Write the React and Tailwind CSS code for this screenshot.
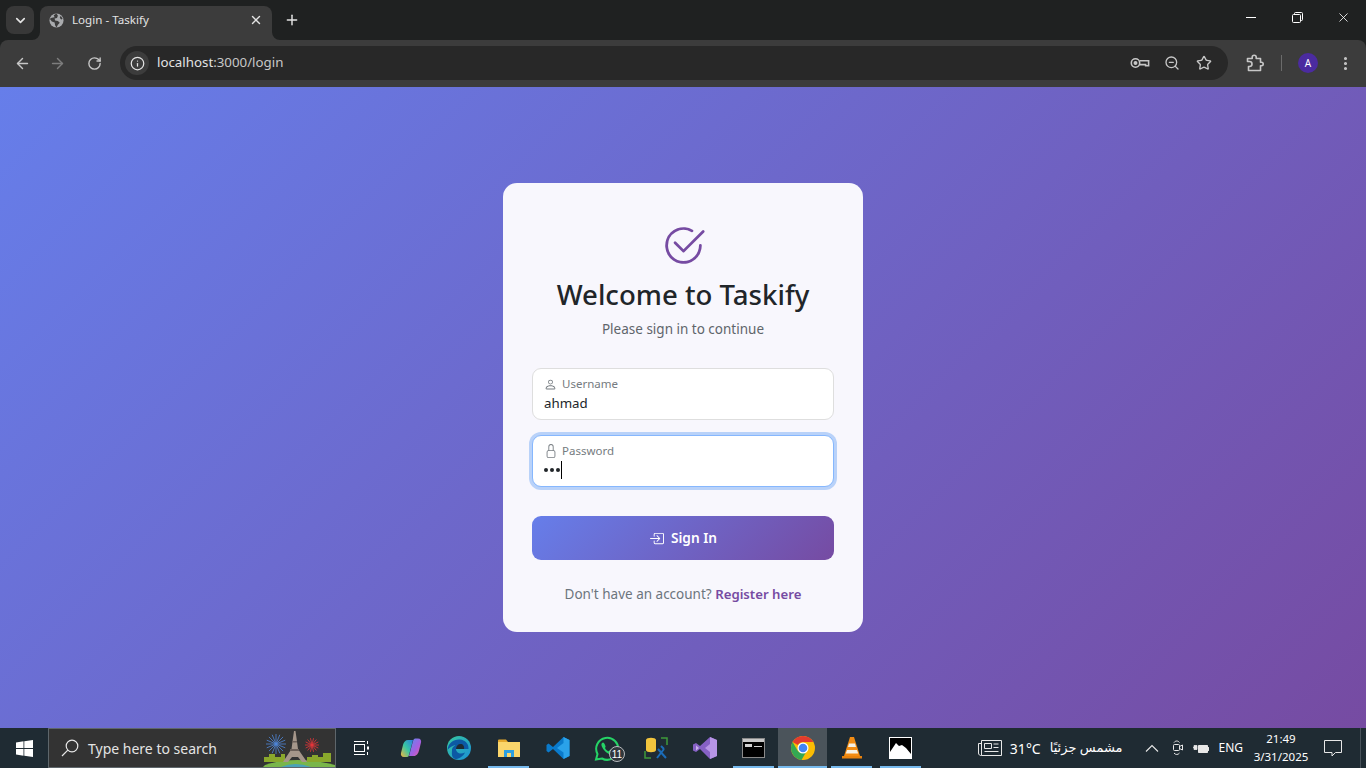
import { BsCheck2Circle, BsPerson, BsLock, BsBoxArrowInRight } from "react-icons/bs"
import { ChevronDown, X, Plus, ArrowLeft, ArrowRight, RotateCw, Info, ZoomOut, Star, EllipsisVertical } from "lucide-react"

const ui = "font-['Noto_Sans','Open_Sans',sans-serif]"

function KeyIcon() {
  return (
    <svg width="20" height="12" viewBox="0 0 20 12" fill="none" stroke="#c7c7c7" strokeWidth="1.6">
      <circle cx="5.5" cy="6" r="4.2" />
      <circle cx="5.5" cy="6" r="1.2" fill="#c7c7c7" />
      <path d="M9.7 3.8H18.6V8.8H15.6V7.6H9.7" />
    </svg>
  )
}

function RestoreIcon() {
  return (
    <svg width="11" height="11" viewBox="0 0 11 11" fill="none" stroke="#fff" strokeWidth="1">
      <rect x="0.5" y="2.5" width="8" height="8" rx="1" />
      <path d="M2.5 2.5V1.500a1 1 0 0 1 1-1h6a1 1 0 0 1 1 1v6a1 1 0 0 1-1 1H8.500" />
    </svg>
  )
}

function PuzzleIcon() {
  return (
    <svg width="18" height="18" viewBox="0 0 18 18" fill="none" stroke="#c7c7c7" strokeWidth="1.600" strokeLinejoin="round" className="ml-[18px]">
      <path d="M1.500 4.500H6.200V3.300a2 2 0 0 1 4 0V4.500H14.500V8.300H15.500a1.700 1.700 0 0 1 0 3.400H14.500V16.500H2.500V12.500H3.500a2.500 2.500 0 0 0 0-5H1.500z" />
    </svg>
  )
}

function TabFlare({ side }) {
  return (
    <svg width="8" height="8" viewBox="0 0 8 8" className={side === "left" ? "absolute bottom-0 -left-2" : "absolute bottom-0 -right-2"}>
      <path d={side === "left" ? "M8 0V8H0A8 8 0 0 0 8 0Z" : "M0 0V8H8A8 8 0 0 1 0 0Z"} fill="#3c3c3c" />
    </svg>
  )
}

function BrowserChrome() {
  return (
    <div className={`bg-[#1f2121] text-[#e3e3e3] ${ui}`}>
      <div className="flex h-[40px] items-end pl-[6px]">
        <div className="mb-[6px] flex h-[28px] w-[28px] items-center justify-center rounded-lg bg-[#383838]">
          <ChevronDown size={15} strokeWidth={2.6} color="#e3e3e3" />
        </div>
        <div className="relative ml-[6px] flex h-[34px] w-[232px] items-center rounded-t-lg bg-[#3c3c3c] pb-[6px] pl-[9px] pr-[8px]">
          <TabFlare side="left" />
          <TabFlare side="right" />
          <svg width="15" height="15" viewBox="0 0 16 16" className="shrink-0">
            <circle cx="8" cy="8" r="7.5" fill="#a9abae" />
            <path d="M8 .5 5 2.500l1 2-3 .5L.8 6 3 9l3 1 .5 3 1.500 2.400 1.500-3 2-2-2-2-3-.5-.5-2 2.500-.5 1-2.500zM12.500 3l2 3-1.500 1-1.500-2z" fill="#3c3c3c" />
          </svg>
          <span className="ml-[8px] flex-1 text-[11.6px] leading-none">Login - Taskify</span>
          <X size={14} strokeWidth={2.4} color="#e3e3e3" className="mr-[1px]" />
        </div>
        <div className="mb-[6px] ml-[12px] flex h-[28px] w-[16px] items-center justify-center">
          <Plus size={16} strokeWidth={2.2} color="#e3e3e3" />
        </div>
        <div className="mb-[6px] ml-auto flex h-[34px] items-center">
          <div className="flex w-[46px] justify-center"><div className="h-[1px] w-[10px] bg-white" /></div>
          <div className="flex w-[46px] justify-center"><RestoreIcon /></div>
          <div className="flex w-[46px] justify-center"><X size={15} strokeWidth={1.3} color="#fff" /></div>
        </div>
      </div>
      <div className="flex h-[47px] items-center rounded-t-[8px] bg-[#3c3c3c] pb-[1px] pl-[14px] pr-[12px]">
        <ArrowLeft size={17} strokeWidth={2} color="#c7c7c7" />
        <ArrowRight size={17} strokeWidth={2} color="#7d7d7d" className="ml-[18px]" />
        <RotateCw size={15} strokeWidth={2.2} color="#c7c7c7" className="ml-[21px]" />
        <div className="ml-[18px] flex h-[34px] flex-1 items-center rounded-full bg-[#282828] pl-[5px] pr-[16px]">
          <div className="flex h-[24px] w-[24px] items-center justify-center rounded-full bg-[#3c3c3c]">
            <Info size={15} strokeWidth={2} color="#e3e3e3" />
          </div>
          <div className="ml-[8px] flex-1 text-[13.3px] leading-none">
            localhost<span className="text-[#c7c7c7]">:3000/login</span>
          </div>
          <KeyIcon />
          <ZoomOut size={16} strokeWidth={2} color="#c7c7c7" className="ml-[14px]" />
          <Star size={16} strokeWidth={2} color="#c7c7c7" className="ml-[16px]" />
        </div>
        <PuzzleIcon />
        <div className="ml-[17px] h-[16px] w-[1px] bg-[#6b6b6b]" />
        <div className="ml-[16px] flex h-[20px] w-[20px] items-center justify-center rounded-full bg-[#4b2ba0] text-[10px] text-white">A</div>
        <EllipsisVertical size={17} strokeWidth={2.4} color="#c7c7c7" className="ml-[19px]" />
      </div>
    </div>
  )
}

function Field({ icon, label, focused, children }) {
  return (
    <div className={focused
      ? "h-[52px] rounded-[9px] border border-[#86b7fe] bg-white pl-[11px] shadow-[0_0_0_3px_#b9d2f9]"
      : "h-[52px] rounded-[9px] border border-[#dedede] bg-white pl-[11px]"}>
      <div className="flex h-[23px] items-end text-[11.5px] leading-[16px] text-[#757b80]">
        <span className="flex h-[16px] w-[18px] items-center">{icon}</span>
        {label}
      </div>
      <div className="mt-[1px]">{children}</div>
    </div>
  )
}

function LoginCard() {
  return (
    <div className="h-[449px] w-[360px] rounded-[14px] bg-[#f8f7fd] px-[29px] pt-[40px]">
      <div className="flex justify-center text-[#764ba2]">
        <BsCheck2Circle size={45} />
      </div>
      <h1 className="mt-[6px] text-center text-[27.6px] font-medium leading-[40px] text-[#212529]">Welcome to Taskify</h1>
      <p className="mt-[3px] text-center text-[13.5px] leading-[24px] text-[#5f656b]">Please sign in to continue</p>
      <div className="mt-[27px]">
        <Field icon={<BsPerson size={13} />} label="Username">
          <div className="text-[13.3px] leading-[20px] text-[#212529]">ahmad</div>
        </Field>
      </div>
      <div className="mt-[15px]">
        <Field icon={<BsLock size={14} />} label="Password" focused>
          <div className="flex h-[20px] items-center">
            <span className="h-[4px] w-[4px] rounded-full bg-[#212529]" />
            <span className="ml-[2px] h-[4px] w-[4px] rounded-full bg-[#212529]" />
            <span className="ml-[2px] h-[4px] w-[4px] rounded-full bg-[#212529]" />
            <span className="ml-[1px] h-[18px] w-[1px] bg-black" />
          </div>
        </Field>
      </div>
      <button className="mt-[29px] flex h-[44px] w-full items-center justify-center rounded-[9px] bg-[linear-gradient(135deg,#667eea,#764ba2)] text-[13.7px] font-semibold text-white">
        <BsBoxArrowInRight size={15} className="mr-[7px]" />
        Sign In
      </button>
      <p className="mt-[23px] text-center text-[13.5px] leading-[22px] text-[#6c757d]">
        Don't have an account? <span className="text-[13.2px] font-semibold text-[#764ba2]">Register here</span>
      </p>
    </div>
  )
}

function WinLogo() {
  return (
    <svg width="17" height="17" viewBox="0 0 17 17" fill="#fff">
      <path d="M0 2.400 7.500 1.300V8H0zM8.300 1.200 17 0V8H8.300zM0 8.900H7.500V15.700L0 14.600zM8.300 8.900H17V17L8.300 15.800z" />
    </svg>
  )
}

function Burst({ cx, cy, r, color, count }) {
  const rays = []
  for (let i = 0; i < count; i++) {
    const a = (i / count) * Math.PI * 2
    rays.push(
      <line key={i} x1={cx} y1={cy} x2={cx + Math.cos(a) * r} y2={cy + Math.sin(a) * r} stroke={color} strokeWidth="0.8" />
    )
  }
  return <g>{rays}</g>
}

function SearchArt() {
  return (
    <svg width="72" height="38" viewBox="0 0 72 38" className="absolute bottom-0 right-0">
      <Burst cx={13} cy={15} r={10} color="#4f86d8" count={16} />
      <Burst cx={49} cy={16} r={7} color="#e8353a" count={14} />
      <path d="M2 36Q32 26 72 36V38H0z" fill="#79b64a" />
      <path d="M18 38Q32 32 48 38z" fill="#4aa3b8" />
      <path d="M1 28h5v-3h6v3h6v-3h4v8H1zM44 28h5v-2h6v2h5v-4h8v9H44z" fill="#8aa82c" />
      <path d="M20 33 28.500 20 30 9 31 2h1.500l1 7 1.500 11 9 13h-5l-4-5h-6l-4 5z" fill="#a5968a" />
      <path d="M29 12h5v1.500h-5zM27 20h9v2h-9z" fill="#6b5f58" />
    </svg>
  )
}

function TaskItem({ active, running, children }) {
  const bg = active ? "bg-[#4b545b]" : ""
  return (
    <div className={`relative flex h-[40px] w-[49px] shrink-0 items-center justify-center ${bg}`}>
      {children}
      {running && <span className={active ? "absolute inset-x-0 bottom-0 h-[2px] bg-[#76b9ed]" : "absolute inset-x-[4px] bottom-0 h-[2px] bg-[#76b9ed]"} />}
    </div>
  )
}

function Taskbar() {
  return (
    <div className={`flex h-[40px] items-center bg-[#1f2b33] text-white ${ui}`}>
      <div className="flex w-[48px] shrink-0 justify-center"><WinLogo /></div>
      <div className="relative mr-[1px] flex h-[40px] w-[288px] shrink-0 items-center overflow-hidden border border-[#5e666b] bg-[#333333] pl-[12px]">
        <svg width="18" height="18" viewBox="0 0 18 18" fill="none" stroke="#e8e8e8" strokeWidth="1.200">
          <circle cx="11" cy="7" r="5.800" />
          <path d="M6.800 11.200 1 17" />
        </svg>
        <span className="ml-[9px] text-[14px] text-[#e4e4e4]">Type here to search</span>
        <SearchArt />
      </div>
      <TaskItem>
        <svg width="16" height="16" viewBox="0 0 16 16" fill="none" stroke="#fff" strokeWidth="1" className="-ml-[2px]">
          <path d="M1 1.500H12M1 14.500H12" />
          <rect x="1.500" y="4.500" width="10" height="7" />
          <path d="M14.500 1v3M14.500 12v3" />
          <rect x="14" y="6.500" width="2" height="3" fill="#fff" stroke="none" />
        </svg>
      </TaskItem>
      <TaskItem>
        <svg width="22" height="22" viewBox="0 0 22 22">
          <defs>
            <linearGradient id="cop1" x1="0" y1="1" x2="1" y2="0"><stop offset="0" stopColor="#f4b63f" /><stop offset="0.5" stopColor="#37c6a5" /><stop offset="1" stopColor="#2c7de0" /></linearGradient>
            <linearGradient id="cop2" x1="0" y1="0" x2="1" y2="1"><stop offset="0" stopColor="#5a8cf0" /><stop offset="0.6" stopColor="#a75ee0" /><stop offset="1" stopColor="#f0629a" /></linearGradient>
          </defs>
          <path d="M8 3h5l-4 15c-.5 2-1.500 2-3 2H4c-2.500 0-3.500-2-3-4l2-8c.7-3 2.500-5 5-5z" fill="url(#cop1)" />
          <path d="M14 19H9l4-15c.5-2 1.500-2.500 3-2.500h2c2.500 0 3.500 2 3 4l-2 8c-.7 3-2.500 5.500-5 5.500z" fill="url(#cop2)" />
        </svg>
      </TaskItem>
      <TaskItem>
        <svg width="24" height="24" viewBox="0 0 24 24" className="-ml-[1px]">
          <defs>
            <linearGradient id="edg1" x1="0" y1="0" x2="1" y2="1"><stop offset="0" stopColor="#37c8a0" /><stop offset="1" stopColor="#1a8fd8" /></linearGradient>
          </defs>
          <circle cx="12" cy="12" r="12" fill="url(#edg1)" />
          <path d="M.5 14C1 7 7 3 13 3.500c5 .5 9 4 8.500 9.500H9c0 3.500 4 6 9 3.500-2 4-6 6.500-9.500 6.500C4 22 5 17 5 14c0-3 3-5 5.500-5-4 0-8 2-10 5z" fill="#0c59a4" />
          <path d="M9 13c0-3 2-5 4.500-5s4 2 3.500 5z" fill="#1f2b33" />
        </svg>
      </TaskItem>
      <TaskItem running>
        <svg width="22" height="20" viewBox="0 0 22 20">
          <path d="M0 2.500A1 1 0 0 1 1 1.500h7l2 2.500H0z" fill="#e6a92c" />
          <rect y="4" width="22" height="15" fill="#fbd66b" />
          <path d="M6 19v-7h10v7h-3v-4H9v4z" fill="#2d9fe0" />
        </svg>
      </TaskItem>
      <TaskItem>
        <svg width="24" height="24" viewBox="0 0 24 24">
          <path d="M17.500 1 23.500 4v16l-6 3L7 13l-4.500 3.500L.5 15V9l2-1.500L7 11z" fill="#0a7acb" />
          <path d="M17.500 1 23.500 4v16l-6 3V16.500L11 12l6.500-5z" fill="#2aa2ea" />
        </svg>
      </TaskItem>
      <TaskItem>
        <svg width="31" height="26" viewBox="0 0 31 26" className="ml-[5px] mt-[1px]">
          <path d="M2 23.500 3.500 18A11 11 0 1 1 8 22.500z" fill="none" stroke="#25d366" strokeWidth="2" />
          <path d="M8 7c2-2 3 2 3.500 3s-1 1.500 0 3 3 2.500 3.500 2 1-1.500 2-1 3 1.500 2.500 3c-1 2-4 2-7-.5S6 9 8 7z" fill="#25d366" />
          <circle cx="23" cy="18" r="7.500" fill="#30373c" stroke="#b9bcbf" />
          <text x="23" y="21.500" textAnchor="middle" fontSize="10" fontFamily="Liberation Sans, sans-serif" fill="#fff">11</text>
        </svg>
      </TaskItem>
      <TaskItem>
        <svg width="24" height="24" viewBox="0 0 24 24">
          <path d="M1 15v7h6M23 9V2h-6" fill="none" stroke="#3f9a3b" strokeWidth="1.500" />
          <path d="M2 4c0-3 10-3 10 0v10c0 3-10 3-10 0z" fill="#f2c53d" />
          <path d="M13 22 20 13M14 13l8 9M17 10l3 3" stroke="#1b6cb8" strokeWidth="2" fill="none" />
        </svg>
      </TaskItem>
      <TaskItem>
        <svg width="24" height="24" viewBox="0 0 24 24">
          <path d="M17 1 24 4v16l-7 3L7 13l-4 3-3-1.500v-6L3 7l4 3z" fill="#8661c5" />
          <path d="M17 1 24 4v16l-7 3V16l-5-4 5-4z" fill="#b795e6" />
          <path d="M3 9.500v5L6 12z" fill="#c9b2ea" />
        </svg>
      </TaskItem>
      <TaskItem running>
        <div className="relative h-[20px] w-[23px] border border-[#8a8a8a] bg-black">
          <div className="h-[3px] bg-[#c8c8c8]" />
          <div className="absolute left-[2px] top-[5px] h-[3px] w-[7px] bg-[#d0d0d0]" />
          <div className="absolute left-[11px] top-[7px] h-[1px] w-[8px] bg-[#d0d0d0]" />
        </div>
      </TaskItem>
      <TaskItem active running>
        <svg width="24" height="24" viewBox="0 0 24 24">
          <circle cx="12" cy="12" r="12" fill="#fbbc04" />
          <path d="M12 0A12 12 0 0 1 22.390 6H12a6 6 0 0 0-5.200 3L1.610 6A12 12 0 0 1 12 0z" fill="#e33b2e" />
          <path d="M1.610 6A12 12 0 0 0 10.500 23.900L15.700 15A6 6 0 0 1 6.800 15z" fill="#34a853" />
          <circle cx="12" cy="12" r="5.500" fill="#fff" />
          <circle cx="12" cy="12" r="4.300" fill="#4285f4" />
        </svg>
      </TaskItem>
      <TaskItem running>
        <svg width="20" height="24" viewBox="0 0 20 24">
          <path d="M8 1h4l6 19H2z" fill="#f28c13" />
          <path d="M7 7.500h6l1 3.500H6zM5 14h10l1.200 3.500H3.800z" fill="#f5f1e6" />
          <path d="M0 20h20v2.500H0z" fill="#e8820c" />
        </svg>
      </TaskItem>
      <TaskItem running>
        <svg width="23" height="22" viewBox="0 0 23 22">
          <rect x="0.500" y="0.500" width="22" height="21" fill="#000" stroke="#fff" />
          <path d="M1 21V15L7 6l3 3 3-1 4 3 5 6v5z" fill="#fff" />
        </svg>
      </TaskItem>
      <div className="ml-auto flex h-[40px] items-center pr-[5px]">
        <svg width="24" height="16" viewBox="0 0 24 16" fill="none" stroke="#e8e8e8" strokeWidth="1">
          <path d="M3.500.5H23.500V15.500H3.500zM3.500 3.500H.5V13a2.500 2.500 0 0 0 3 2.500" />
          <path d="M6.500 3.500h7v5h-7zM15.500 4h5M15.500 7.500h5M6.500 11.500h14" />
        </svg>
        <span className="ml-[8px] text-[14px]">31°C</span>
        <span className="ml-[9px] font-['Noto_Sans','DejaVu_Sans',sans-serif] text-[13px]" dir="rtl">مشمس جزئيًا</span>
        <svg width="14" height="8" viewBox="0 0 14 8" fill="none" stroke="#e8e8e8" strokeWidth="1.100" className="ml-[23px]">
          <path d="M1 7.500 7 1.500 13 7.500" />
        </svg>
        <svg width="12" height="16" viewBox="0 0 12 16" fill="none" stroke="#e8e8e8" strokeWidth="1" className="ml-[13px]">
          <rect x="1.500" y="4.500" width="6" height="6" rx="1" />
          <path d="M7.500 6.500l3-1.500v5l-3-1.500M2 2.500C3.500.5 6 .5 7.500 2.500M2 13c1.500 2 4 2 5.500 0" />
        </svg>
        <svg width="16" height="11" viewBox="0 0 16 11" className="ml-[9px]">
          <path d="M5.500 2.500h9v7h-9z" fill="#e8e8e8" stroke="#e8e8e8" />
          <path d="M15 4.500h1v3h-1zM0 4.500h3M1 2.500v4h3v-4z" fill="#e8e8e8" stroke="#e8e8e8" strokeWidth="0.800" />
        </svg>
        <span className="ml-[9px] text-[12px]">ENG</span>
        <div className="ml-[10px] flex w-[56px] flex-col items-center text-[11.5px]">
          <span className="leading-[17px]">21:49</span>
          <span className="leading-[20px]">3/31/2025</span>
        </div>
        <svg width="18" height="17" viewBox="0 0 18 17" fill="none" stroke="#e8e8e8" strokeWidth="1" className="ml-[15px]">
          <path d="M.5.500H17.500V12.500H11.500L8 16V12.500H.5z" />
        </svg>
        <div className="ml-[18px] h-[40px] w-[1px] bg-[#48525a]" />
      </div>
    </div>
  )
}

export default function App() {
  return (
    <div className="flex h-[768px] w-[1366px] flex-col overflow-hidden">
      <BrowserChrome />
      <main className={`flex flex-1 items-center justify-center bg-[linear-gradient(135deg,#667eea,#764ba2)] ${ui}`}>
        <LoginCard />
      </main>
      <Taskbar />
    </div>
  )
}
